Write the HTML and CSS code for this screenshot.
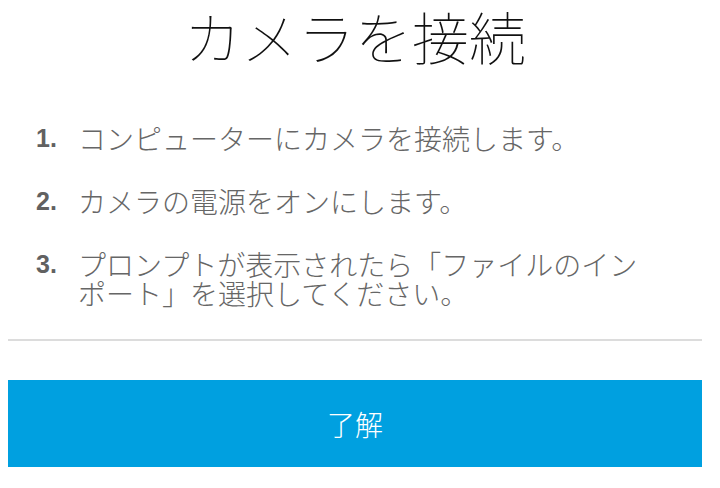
FILE: index.html
```html
<!DOCTYPE html>
<html lang="ja">
<head>
<meta charset="utf-8">
<link rel="stylesheet" href="styles.css">
</head>
<body>
<div class="page">
  <h1 class="title">カメラを接続</h1>
  <ol class="steps">
    <li class="step"><span class="num">1.</span><span class="txt">コンピューターにカメラを接続します。</span></li>
    <li class="step"><span class="num">2.</span><span class="txt">カメラの電源をオンにします。</span></li>
    <li class="step"><span class="num">3.</span><span class="txt">プロンプトが表示されたら「ファイルのインポート」を選択してください。</span></li>
  </ol>
  <hr class="divider">
  <button class="ok">了解</button>
</div>
</body>
</html>
```
FILE: styles.css
```css
html, body {
  margin: 0;
  padding: 0;
  background: #ffffff;
}
.page {
  width: 694px;
  margin-left: 8px;
  display: flex;
  flex-direction: column;
  font-family: "Noto Sans CJK JP", "Noto Sans", sans-serif;
}
.title {
  margin: 2px 0 0 0;
  font-size: 57px;
  line-height: 66px;
  font-weight: 100;
  color: #111;
  text-align: center;
}
.steps {
  list-style: none;
  margin: 56px 0 0 0;
  padding: 0;
  display: flex;
  flex-direction: column;
  gap: 34px;
}
.step {
  display: flex;
  align-items: flex-start;
}
.num {
  width: 70px;
  flex: none;
  box-sizing: border-box;
  padding-left: 28px;
  font-family: "Liberation Sans", Arial, sans-serif;
  font-size: 25px;
  line-height: 29px;
  color: #616161;
  font-weight: 700;
}
.txt {
  width: 580px;
  font-size: 28px;
  line-height: 29px;
  font-weight: 300;
  color: #666;
}
.divider {
  margin: 31px 0 0 0;
  border: none;
  height: 2px;
  background: #dcdcdc;
}
.ok {
  margin-top: 39px;
  height: 87px;
  border: none;
  background: #00a0e0;
  color: #ffffff;
  font-family: "Noto Sans CJK JP", sans-serif;
  font-size: 28px;
  font-weight: 300;
  padding: 0;
}
```
